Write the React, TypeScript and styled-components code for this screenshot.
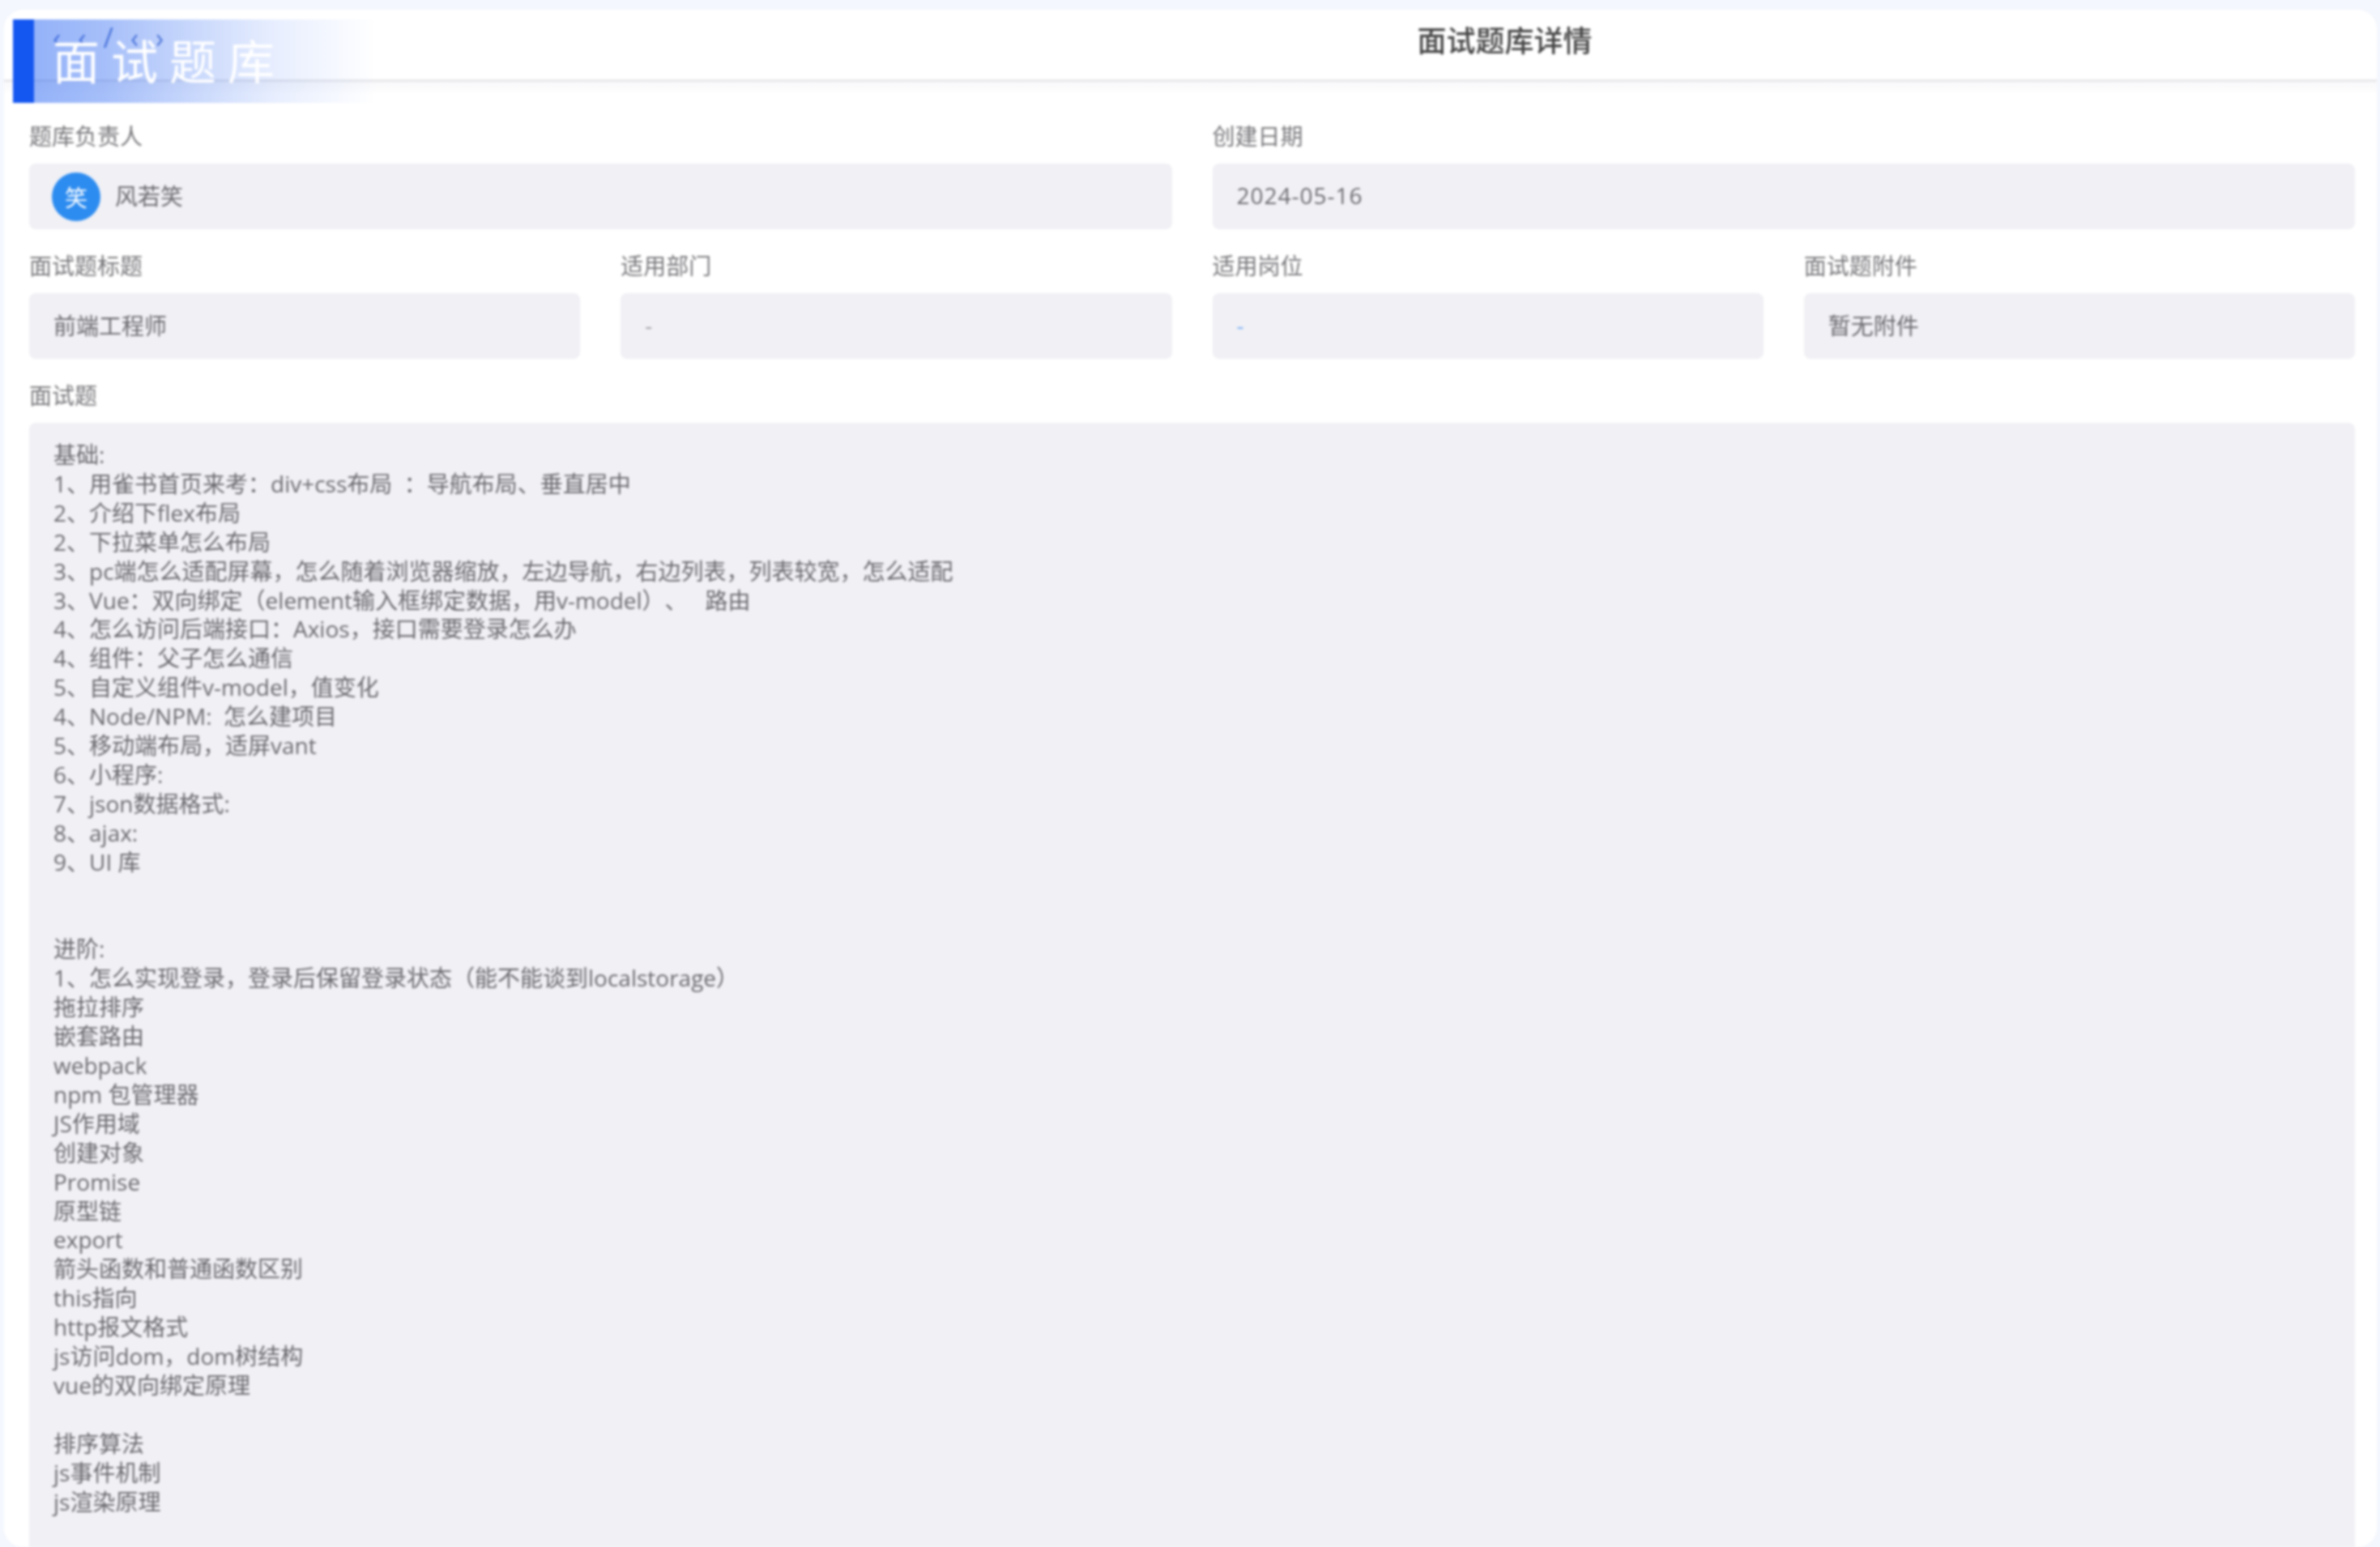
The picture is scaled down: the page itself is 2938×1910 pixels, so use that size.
import React from "react";
import styled, { createGlobalStyle } from "styled-components";

const Global = createGlobalStyle`
  html, body { margin: 0; padding: 0; height: 1910px; overflow: hidden; background: #f4f7fd; }
  * { box-sizing: border-box; }
`;

const Page = styled.div`
  height: 1910px;
  padding: 12px 4px 0 5px;
  font-family: "Open Sans", "Noto Sans CJK SC", sans-serif;
  font-size: 28px;
  color: #6a6a6e;
  text-spacing-trim: space-all;
  filter: blur(1.4px);
`;

const Card = styled.div`
  position: relative;
  height: 1898px;
  background: #fff;
  border-radius: 24px;
  overflow: hidden;
`;

const Header = styled.header`
  height: 89px;
  display: flex;
  align-items: center;
  justify-content: center;
  padding: 0 0 9px 776px;
  border-bottom: 3px solid #e8e8ec;
`;

const Title = styled.h1`
  margin: 0;
  font-size: 36px;
  line-height: 40px;
  font-weight: 500;
  color: #444;
`;

const Banner = styled.div`
  position: absolute;
  left: 11px;
  top: 12px;
  width: 448px;
  height: 103px;
  display: flex;
  background: linear-gradient(
    90deg,
    rgba(20, 86, 240, 0.48) 0%,
    rgba(20, 86, 240, 0.38) 25%,
    rgba(20, 86, 240, 0.23) 50%,
    rgba(20, 86, 240, 0.1) 72%,
    rgba(20, 86, 240, 0) 100%
  );
`;

const Stripe = styled.div`
  width: 26px;
  background: #1456f0;
`;

const BannerText = styled.div`
  padding: 14px 0 0 23px;
  font-size: 58px;
  line-height: 76px;
  letter-spacing: 14px;
  color: #fff;
  white-space: nowrap;
`;

const Crumb = styled.div`
  position: absolute;
  left: 60px;
  top: 14px;
  font-size: 34px;
  line-height: 40px;
  letter-spacing: 21px;
  color: #6c87cf;
  white-space: nowrap;
`;

const Main = styled.main`
  display: grid;
  grid-template-columns: repeat(4, 1fr);
  column-gap: 50px;
  row-gap: 27px;
  padding: 49px 27px 0 31px;
  background: linear-gradient(#f8f8fa, #fff 16px);
`;

const Field = styled.section<{ $span: number }>`
  grid-column: span ${(p) => p.$span};
  min-width: 0;
`;

const Label = styled.div`
  height: 36px;
  margin-bottom: 16px;
  line-height: 36px;
  color: #77777b;
`;

const Value = styled.div`
  height: 81px;
  display: flex;
  align-items: center;
  gap: 18px;
  padding: 0 30px 3px;
  border-radius: 8px;
  background: #f0f0f5;
`;

const Avatar = styled.span`
  width: 60px;
  height: 60px;
  flex: none;
  margin: 3px 0 0 -2px;
  display: flex;
  align-items: center;
  justify-content: center;
  border-radius: 50%;
  background: #2d8cf0;
  color: #fff;
  font-size: 28px;
`;

const DateText = styled.span`
  letter-spacing: 1px;
`;

const Dash = styled.span<{ $blue?: boolean }>`
  color: ${(p) => (p.$blue ? "#7fb0f5" : "#a0a0a6")};
`;

const Body = styled.div`
  height: 1400px;
  padding: 22px 30px;
  border-radius: 8px;
  background: #f0f0f5;
  white-space: pre;
  line-height: 35.9px;
`;

const text = `基础:
1、用雀书首页来考：div+css布局  ：导航布局、垂直居中
2、介绍下flex布局
2、下拉菜单怎么布局
3、pc端怎么适配屏幕，怎么随着浏览器缩放，左边导航，右边列表，列表较宽，怎么适配
3、Vue：双向绑定（element输入框绑定数据，用v-model）、   路由
4、怎么访问后端接口：Axios，接口需要登录怎么办
4、组件：父子怎么通信
5、自定义组件v-model，值变化
4、Node/NPM:  怎么建项目
5、移动端布局，适屏vant
6、小程序:
7、json数据格式:
8、ajax:
9、UI 库


进阶:
1、怎么实现登录，登录后保留登录状态（能不能谈到localstorage）
拖拉排序
嵌套路由
webpack
npm 包管理器
JS作用域
创建对象
Promise
原型链
export
箭头函数和普通函数区别
this指向
http报文格式
js访问dom，dom树结构
vue的双向绑定原理

排序算法
js事件机制
js渲染原理`;

export default function App() {
  return (
    <Page>
      <Global />
      <Card>
        <Header>
          <Title>面试题库详情</Title>
        </Header>
        <Crumb>{"‹‹/‹›"}</Crumb>
        <Banner>
          <Stripe />
          <BannerText>面试题库</BannerText>
        </Banner>
        <Main>
          <Field $span={2}>
            <Label>题库负责人</Label>
            <Value>
              <Avatar>笑</Avatar>
              风若笑
            </Value>
          </Field>
          <Field $span={2}>
            <Label>创建日期</Label>
            <Value>
              <DateText>2024-05-16</DateText>
            </Value>
          </Field>
          <Field $span={1}>
            <Label>面试题标题</Label>
            <Value>前端工程师</Value>
          </Field>
          <Field $span={1}>
            <Label>适用部门</Label>
            <Value>
              <Dash>-</Dash>
            </Value>
          </Field>
          <Field $span={1}>
            <Label>适用岗位</Label>
            <Value>
              <Dash $blue>-</Dash>
            </Value>
          </Field>
          <Field $span={1}>
            <Label>面试题附件</Label>
            <Value>暂无附件</Value>
          </Field>
          <Field $span={4}>
            <Label>面试题</Label>
            <Body>{text}</Body>
          </Field>
        </Main>
      </Card>
    </Page>
  );
}
